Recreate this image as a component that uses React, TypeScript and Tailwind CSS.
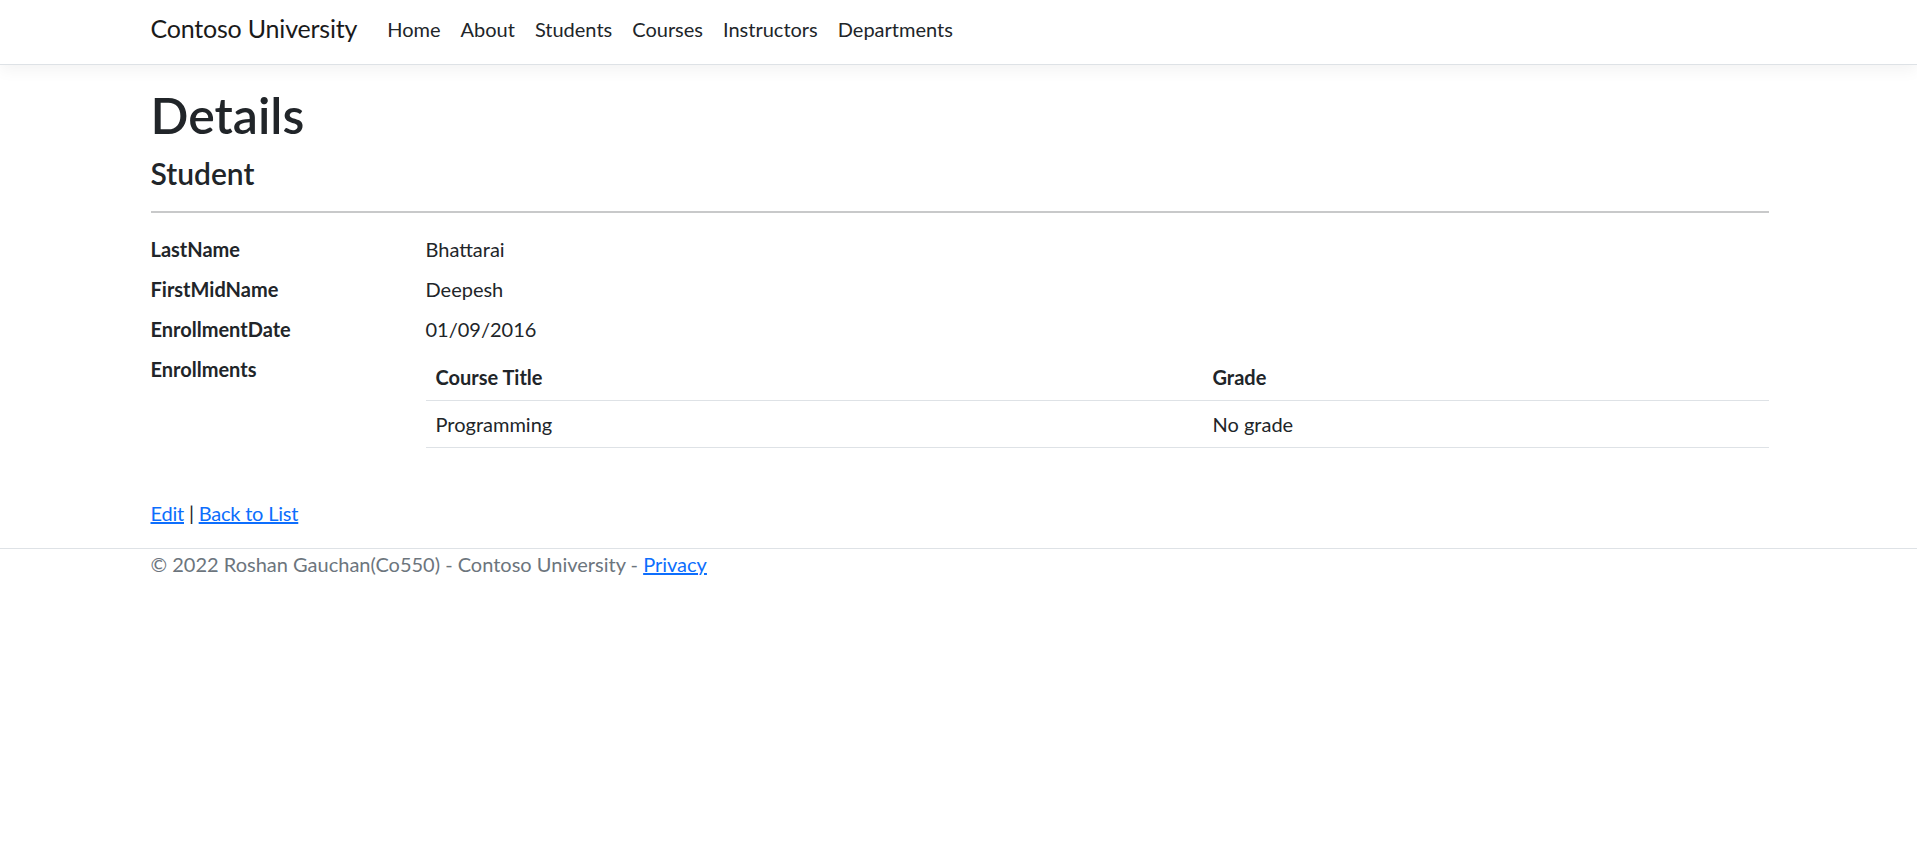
import React from 'react';

const navLinks = ['Home', 'About', 'Students', 'Courses', 'Instructors', 'Departments'];

const fields = [
  { label: 'LastName', value: 'Bhattarai' },
  { label: 'FirstMidName', value: 'Deepesh' },
  { label: 'EnrollmentDate', value: '01/09/2016' },
];

export default function App() {
  return (
    <div className="min-h-screen bg-white text-[#212529] font-['Lato','Open_Sans',sans-serif] text-[20px] leading-[1.5]">
      {/* Navbar */}
      <nav className="bg-white border-b border-[#dee2e6] shadow-[0_5px_15px_rgba(0,0,0,0.05)]">
        <div className="max-w-[1650px] mx-auto pl-[17px] pr-[15px] h-[64px] flex items-center pb-[6px]">
          <a href="#" className="text-[25px] text-[#1a1a1a] mr-[20px] whitespace-nowrap tracking-[-0.008em]">
            Contoso University
          </a>
          <ul className="flex">
            {navLinks.map(link => (
              <li key={link}>
                <a href="#" className="block px-[10px] text-[#212529]">
                  {link}
                </a>
              </li>
            ))}
          </ul>
        </div>
      </nav>

      {/* Main */}
      <main className="max-w-[1650px] mx-auto pl-[17px] pr-[15px] pt-[20px] pb-[20px]">
        <h1 className="text-[50px] leading-[1.2] font-semibold mb-[10px]">Details</h1>
        <div>
          <h4 className="text-[30px] leading-[1.2] font-semibold">Student</h4>
          <hr className="mt-[20px] mb-[21px] border-0 h-[2px] bg-[#c8c9ca]" />
          <dl className="mb-[20px]">
            {fields.map(f => (
              <div key={f.label} className="flex">
                <dt className="w-[275px] shrink-0 font-bold">{f.label}</dt>
                <dd className="flex-1 mb-[10px]">{f.value}</dd>
              </div>
            ))}
            <div className="flex">
              <dt className="w-[275px] shrink-0 font-bold">Enrollments</dt>
              <dd className="flex-1 mb-[10px]">
                <table className="w-full mb-[20px] border-collapse">
                  <thead>
                    <tr className="border-b border-[#dee2e6]">
                      <th className="w-[777px] px-[10px] py-[8px] text-left font-bold">Course Title</th>
                      <th className="px-[10px] py-[8px] text-left font-bold">Grade</th>
                    </tr>
                  </thead>
                  <tbody>
                    <tr className="border-b border-[#dee2e6]">
                      <td className="px-[10px] py-[8px]">Programming</td>
                      <td className="px-[10px] py-[8px]">No grade</td>
                    </tr>
                  </tbody>
                </table>
              </dd>
            </div>
          </dl>
        </div>
        <div className="tracking-[-0.01em]">
          <a href="#" className="text-[#0d6efd] underline">Edit</a> |{' '}
          <a href="#" className="text-[#0d6efd] underline">Back to List</a>
        </div>
      </main>

      {/* Footer */}
      <footer className="border-t border-[#dee2e6] text-[#6c757d]">
        <div className="max-w-[1650px] mx-auto pl-[17px] pr-[15px] whitespace-nowrap">
          &copy; 2022 Roshan Gauchan(Co550) - Contoso University -{' '}
          <a href="#" className="text-[#0d6efd] underline">Privacy</a>
        </div>
      </footer>
    </div>
  );
}
